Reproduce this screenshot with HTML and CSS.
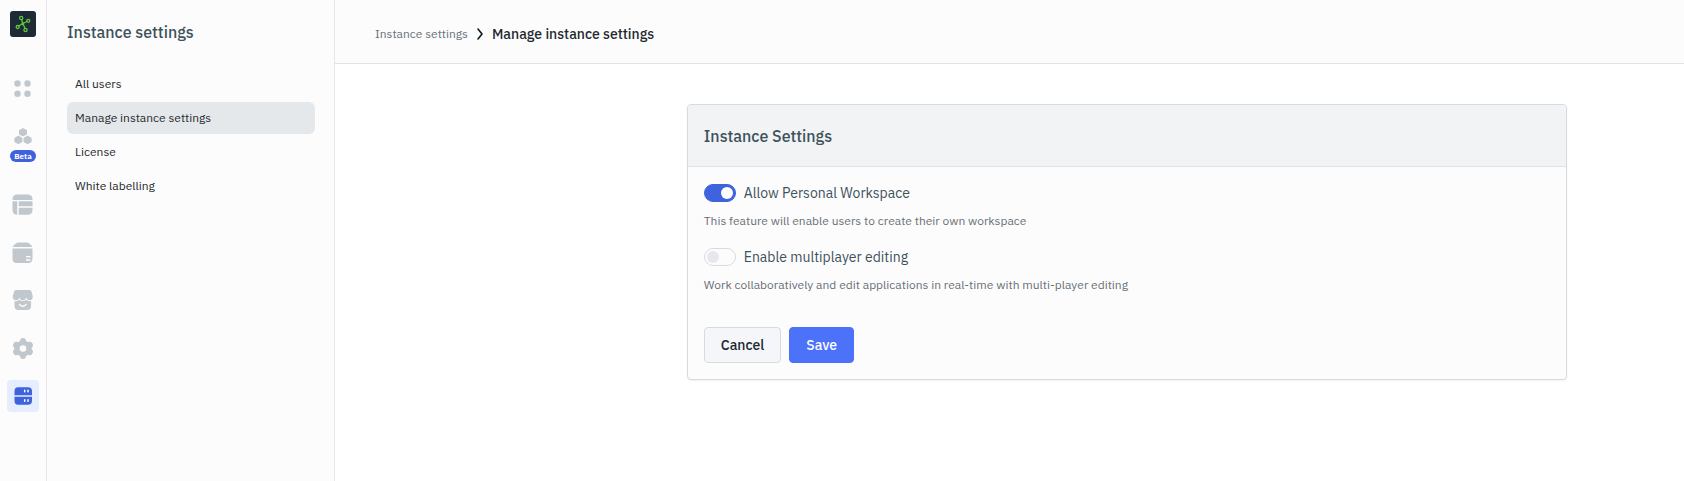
FILE: index.html
```html
<!DOCTYPE html>
<html lang="en">
<head>
<meta charset="utf-8">
<meta name="viewport" content="width=device-width, initial-scale=1">
<title>Manage instance settings</title>
<link rel="stylesheet" href="styles.css">
</head>
<body>
<div class="app">
  <nav class="rail" aria-label="Main">
    <a class="logo" href="#" aria-label="Home">
      <svg viewBox="0 0 26 26" width="26" height="26" fill="none" stroke="#5fc63a" stroke-width="1.3" stroke-linecap="round">
        <path d="M11.700 8.700 12.800 12.500 8.800 15M12.800 12.500 17 10.500M12.800 12.500 15 17"/>
        <circle cx="11.200" cy="7" r="1.600"/><circle cx="18.300" cy="9.800" r="1.500"/>
        <circle cx="7.700" cy="16" r="1.500"/><circle cx="15.500" cy="18.900" r="1.600"/>
        <circle cx="12.800" cy="12.900" r=".8"/>
      </svg>
    </a>
    <a class="rail-item" href="#" aria-label="Dashboard">
      <svg viewBox="0 0 32 32" width="32" height="32" fill="currentColor"><circle cx="10.500" cy="11.500" r="3.200"/><circle cx="20.500" cy="11.500" r="3.200"/><circle cx="10.500" cy="21.700" r="3.200"/><circle cx="20.500" cy="21.700" r="3.200"/></svg>
    </a>
    <a class="rail-item rail-item-tagged" href="#">
      <svg viewBox="0 0 32 25" width="32" height="25" aria-hidden="true" fill="currentColor" stroke="currentColor" stroke-width="1.300" stroke-linejoin="round"><path d="M16 8.700l3.400 1.900v3.300L16 15.800l-3.400-1.900v-3.300zM11.400 16.400l3.400 1.900v3.300l-3.400 1.900L8 21.600v-3.300zM20.600 16.400l3.400 1.900v3.300l-3.400 1.900-3.400-1.900v-3.300z"/></svg>
      <span class="tag">Beta</span>
    </a>
    <a class="rail-item" href="#" aria-label="Tables">
      <svg viewBox="0 0 32 32" width="32" height="32" fill="currentColor"><path d="M10.500 6.500h10q5 0 5 5v.5h-20v-.5q0-5 5-5zM5.500 13.300h4.700v13.500q-4.700 0-4.700-4.800zM11.700 13.300h13.800v4.900H11.700zM11.700 19.700h13.800V22q0 4.800-5 4.800h-8.800z"/></svg>
    </a>
    <a class="rail-item" href="#" aria-label="Data sources">
      <svg viewBox="0 0 32 32" width="32" height="32" fill="currentColor"><path d="M11.500 6.500h8q3 0 6 4.500h-20q3-4.500 6-4.500z"/><path fill-rule="evenodd" d="M5.500 12.500h20V22q0 5-4 5h-12q-4 0-4-4zM19 20v1.500h4.500V20zM19 23.200v1.500h4.500v-1.500z"/></svg>
    </a>
    <a class="rail-item" href="#" aria-label="Marketplace">
      <svg viewBox="0 0 32 32" width="32" height="32" fill="currentColor"><path d="M9 6h13.500q1.500 0 2 1.500l1.300 5q0 3.700-3.200 3.700-2.500 0-3.400-2.500-1 2.500-3.400 2.500t-3.400-2.500q-.9 2.500-3.400 2.500-3.300 0-3.300-3.700l1.300-5Q7.500 6 9 6z"/><path fill-rule="evenodd" d="M7.500 17.300q3.200.1 4.800-1.600 1.500 1.300 3.500 1.300t3.500-1.300q1.600 1.700 4.800 1.600v4.200q0 4.500-4 4.500h-8.600q-4 0-4-4.500zM11.500 20q1.700 3.200 4.300 3.200T20.100 20l-1.300-.3q-1 1.800-3 1.800t-3-1.800z"/></svg>
    </a>
    <a class="rail-item" href="#" aria-label="Workspace settings">
      <svg viewBox="0 0 32 32" width="32" height="32" fill="currentColor"><path fill-rule="evenodd" d="M13.500 7.400Q14 6 16 6t2.500 1.400l.8 1.900 1.300.7 2.100-.3q1.500-.2 2.300 1.100l.8 1.500q.7 1.400-.3 2.500l-1 1.700 1 1.700q1 1.100.3 2.500l-.8 1.500q-.8 1.300-2.300 1.100l-2.100-.3-1.300.7-.8 2Q18 27 16 27t-2.500-1.300l-.8-2-1.300-.7-2.100.3q-1.500.2-2.300-1.100l-.8-1.500q-.7-1.400.3-2.500l1-1.700-1-1.700q-1-1.100-.3-2.500l.8-1.500Q7.800 9.500 9.300 9.700l2.100.3 1.300-.7zM16 13.200a3.300 3.300 0 1 0 0 6.600 3.300 3.300 0 0 0 0-6.600z"/></svg>
    </a>
    <a class="rail-item rail-item-active" href="#" aria-label="Instance settings" aria-current="page">
      <svg viewBox="0 0 32 32" width="32" height="32" fill="currentColor"><path d="M11 7.300h10q4 0 4 4v3.900H7.500v-3.900q0-4 3.500-4zM7.500 16.800H25v3.900q0 4-4 4H11q-3.500 0-3.500-4z"/><path fill="none" stroke="#fff" stroke-width="1.500" stroke-linecap="round" d="M17.700 10.300v1.400M21 10.300v1.400M17.700 19.800v1.400M21 19.800v1.400"/></svg>
    </a>
  </nav>

  <aside class="sidebar">
    <h1 class="heading">Instance settings</h1>
    <nav class="menu" aria-label="Instance settings">
      <a class="menu-item" href="#">All users</a>
      <a class="menu-item menu-item-active" href="#" aria-current="page">Manage instance settings</a>
      <a class="menu-item" href="#">License</a>
      <a class="menu-item" href="#">White labelling</a>
    </nav>
  </aside>

  <div class="page">
    <header class="topbar">
      <a class="crumb" href="#">Instance settings</a>
      <svg class="chevron" viewBox="0 0 8 12" width="8" height="12" fill="none" stroke="#11181c" stroke-width="1.600" stroke-linecap="round" stroke-linejoin="round" aria-hidden="true"><path d="M2 1l4 5-4 5"/></svg>
      <span class="crumb-current">Manage instance settings</span>
    </header>
    <main class="content">
      <form class="card">
        <h2 class="heading card-header">Instance Settings</h2>
        <div class="card-body">
          <div class="setting">
            <label class="setting-label" for="personal"><input class="switch" type="checkbox" id="personal" aria-describedby="personal-help" checked>Allow Personal Workspace</label>
            <p class="help" id="personal-help">This feature will enable users to create their own workspace</p>
          </div>
          <div class="setting">
            <label class="setting-label" for="multiplayer"><input class="switch" type="checkbox" id="multiplayer" aria-describedby="multiplayer-help">Enable multiplayer editing</label>
            <p class="help" id="multiplayer-help">Work collaboratively and edit applications in real-time with multi-player editing</p>
          </div>
          <div class="actions">
            <button class="button" type="button">Cancel</button>
            <button class="button button-primary" type="submit">Save</button>
          </div>
        </div>
      </form>
    </main>
  </div>
</div>
</body>
</html>
```

FILE: styles.css
```css
* {
  box-sizing: border-box;
}

body {
  margin: 0;
  background: #fff;
  color: #24292d;
  font: 400 12px/20px "IBM Plex Sans", Roboto, sans-serif;
}

a {
  color: inherit;
  text-decoration: none;
}

svg {
  display: block;
}

.app {
  display: flex;
  min-height: 100vh;
}

.rail {
  display: flex;
  flex: none;
  flex-direction: column;
  align-items: center;
  gap: 16px;
  width: 47px;
  padding: 11px 0 16px;
  background: #fcfcfd;
  border-right: 1px solid #e6e8eb;
}

.logo {
  margin-bottom: 19px;
  background: #1f2a37;
  border-radius: 3px;
}

.rail-item {
  width: 32px;
  border-radius: 4px;
  color: #c1c8cd;
}

.rail-item-tagged {
  display: flex;
  flex-direction: column;
  align-items: center;
  gap: 5px;
  height: 52px;
}

.rail-item-active {
  background: #e6edfe;
  color: #3e63dd;
}

.tag {
  padding: 0 4px;
  background: #3e63dd;
  border-radius: 6px;
  color: #fff;
  font-size: 8px;
  font-weight: 700;
  line-height: 12px;
}

.sidebar {
  flex: none;
  width: 288px;
  padding: 20px 19px 20px 20px;
  background: #fcfcfd;
  border-right: 1px solid #e6e8eb;
}

.heading {
  margin: 0;
  color: #3e525b;
  font-size: 16px;
  font-weight: 500;
  line-height: 24px;
}

.menu {
  display: flex;
  flex-direction: column;
  gap: 2px;
  margin-top: 24px;
}

.menu-item {
  padding: 6px 8px;
  border-radius: 6px;
}

.menu-item-active {
  background: #e4e8eb;
}

.page {
  flex: 1;
  min-width: 0;
}

.topbar {
  display: flex;
  align-items: center;
  height: 64px;
  padding: 4px 40px 0;
  background: #fcfcfd;
  border-bottom: 1px solid #e1e4e7;
}

.crumb {
  color: #687076;
}

.chevron {
  margin: 0 8px;
}

.crumb-current {
  font-size: 14px;
  font-weight: 500;
}

.content {
  display: grid;
  grid-template-columns: 3fr minmax(0, 880px) 1fr;
  padding: 40px 0;
}

.card {
  grid-column: 2;
  overflow: hidden;
  background: #fcfcfd;
  border: 1px solid #d7dbdf;
  border-radius: 4px;
  box-shadow: 0 1px 2px rgba(16, 24, 40, 0.06);
}

.card-header {
  padding: 19px 16px 18px;
  background: #f1f3f5;
  border-bottom: 1px solid #dfe3e6;
}

.card-body {
  display: flex;
  flex-direction: column;
  gap: 16px;
  padding: 16px;
}

.setting-label {
  display: flex;
  align-items: center;
  gap: 8px;
  color: #3e525b;
  font-size: 14px;
}

.switch {
  display: flex;
  align-items: center;
  appearance: none;
  width: 32px;
  height: 18px;
  margin: 0;
  padding: 0 2px;
  background: #fcfcfd;
  border: 1px solid #d7dbdf;
  border-radius: 9px;
}

.switch::before {
  width: 12px;
  height: 12px;
  background: #e6e8eb;
  border-radius: 50%;
  content: "";
}

.switch:checked {
  justify-content: flex-end;
  background: #3e63dd;
  border-color: #3e63dd;
}

.switch:checked::before {
  background: #fff;
}

.help {
  margin: 8px 0 0;
  color: #687076;
}

.actions {
  display: flex;
  gap: 8px;
  margin-top: 16px;
}

.button {
  padding: 7px 16px;
  background: #f4f6fa;
  border: 1px solid #d7dbdf;
  border-radius: 4px;
  color: #1b2630;
  font: inherit;
  font-size: 14px;
  font-weight: 500;
}

.button-primary {
  background: #4d72fa;
  border-color: #4d72fa;
  color: #fff;
}
```
